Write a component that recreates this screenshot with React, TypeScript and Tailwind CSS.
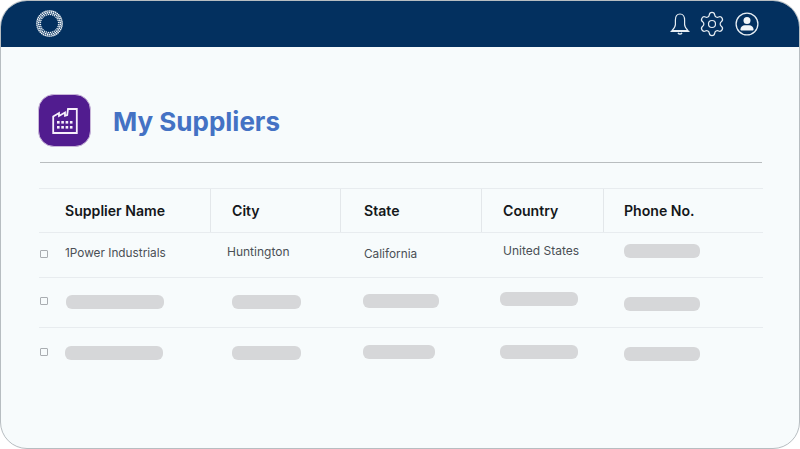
import { Settings } from 'lucide-react';

const columns = 'grid grid-cols-[171px_130px_141px_122px_160px]';
const bar = 'h-[14px] rounded-[6px] bg-[#d6d7d9]';

function Logo() {
  const rings = [
    { r: 12.6, n: 40, s: 0.85 },
    { r: 10.8, n: 34, s: 0.85 },
    { r: 9.1, n: 28, s: 0.75 },
  ];
  return (
    <svg width="28" height="28" viewBox="0 0 28 28">
      {rings.map((ring) =>
        Array.from({ length: ring.n }).map((_, i) => {
          const a = (i / ring.n) * Math.PI * 2 + ring.r;
          return (
            <circle
              key={`${ring.r}-${i}`}
              cx={14.5 + ring.r * Math.cos(a)}
              cy={13.5 + ring.r * Math.sin(a)}
              r={ring.s}
              fill="#f2f6f9"
            />
          );
        })
      )}
    </svg>
  );
}

function BellIcon() {
  return (
    <svg width="20" height="24" viewBox="0 0 20 24" fill="none" stroke="#e6edf3" strokeWidth="1.2" strokeLinejoin="round" strokeLinecap="round">
      <path d="M10 2c-3.2 0-4.6 2.8-4.6 6v4.4c0 2.3-1.3 4-3.4 6.2h16c-2.1-2.2-3.4-3.9-3.4-6.2V8c0-3.2-1.4-6-4.6-6z" />
      <path d="M1 19.4h18" />
      <path d="M8.4 21.4c.5.8 2.7.8 3.2 0" strokeWidth="1.6" />
    </svg>
  );
}

function UserIcon() {
  return (
    <svg width="24" height="24" viewBox="0 0 24 24">
      <circle cx="12" cy="12" r="10.9" fill="none" stroke="#e6edf3" strokeWidth="1.3" />
      <circle cx="12" cy="8.6" r="3.5" fill="#f2f6f9" />
      <path d="M5.4 17.6c0-2.8 2.2-4.4 4.4-4.4h4.4c2.2 0 4.4 1.6 4.4 4.4 0 .5-.3.8-.7.8H6.1c-.4 0-.7-.3-.7-.8z" fill="#f2f6f9" />
    </svg>
  );
}

function FactoryIcon() {
  return (
    <svg width="26" height="26" viewBox="0 0 26 26" fill="none" stroke="#f6effb" strokeWidth="1.8" strokeLinejoin="miter">
      <path d="M1.2 25V8.5L7 5v3l6-3.5v3.2l2.2-.7L16 1h8.8v24z" />
      <g fill="#f6effb" stroke="none">
        <rect x="5" y="13" width="2.6" height="2.6" />
        <rect x="9.3" y="13" width="2.6" height="2.6" />
        <rect x="13.6" y="13" width="2.6" height="2.6" />
        <rect x="17.9" y="13" width="2.6" height="2.6" />
        <rect x="5" y="18" width="2.6" height="2.6" />
        <rect x="9.3" y="18" width="2.6" height="2.6" />
        <rect x="13.6" y="18" width="2.6" height="2.6" />
        <rect x="17.9" y="18" width="2.6" height="2.6" />
      </g>
    </svg>
  );
}

function Checkbox({ className }: { className: string }) {
  return <span className={`block h-[8px] w-[8px] shrink-0 rounded-[1px] border border-[#a9adb1] ${className}`} />;
}

export default function App() {
  return (
    <div className="h-[449px] w-[800px] bg-white font-['Inter',sans-serif]">
      <div className="flex h-[449px] w-[800px] flex-col overflow-hidden rounded-[27px] border border-[#b7bdc1] bg-[#f7fbfc]">
        <header className="flex h-[46px] shrink-0 items-center justify-between bg-[#03305f] pl-[34px] pr-[40px]">
          <Logo />
          <div className="flex items-center gap-[10px]">
            <BellIcon />
            <Settings size={28} strokeWidth={1.05} color="#e6edf3" className="-mx-[2px]" />
            <span className="ml-[1px]"><UserIcon /></span>
          </div>
        </header>

        <main className="flex-1 pl-[38px]">
          <div className="ml-[1px] flex w-[722px] items-center gap-[22px] border-b border-[#b9bdbf] pb-[15px] pt-[47px]">
            <div className="-ml-[2px] flex h-[53px] w-[53px] items-center justify-center rounded-[16px] border border-[#c9b7d9] bg-[#511c8f] pl-[1px]">
              <FactoryIcon />
            </div>
            <h1 className="pt-[2px] text-[26px] font-bold leading-[33px] text-[#4472c4]">My Suppliers</h1>
          </div>

          <div className="mt-[25px] w-[724px] text-[11.8px] text-[#4a4f55]">
            <div className={`${columns} h-[45px] border-y border-[#e8ecef] text-[14.1px] font-semibold text-[#14171a]`}>
              <div className="flex items-center pl-[26px]">Supplier Name</div>
              <div className="flex items-center border-l border-[#e3e7ea] pl-[21px]">City</div>
              <div className="flex items-center border-l border-[#e3e7ea] pl-[23px]">State</div>
              <div className="flex items-center border-l border-[#e3e7ea] pl-[21px]">Country</div>
              <div className="flex items-center border-l border-[#e3e7ea] pl-[20px]">Phone No.</div>
            </div>

            <div className={`${columns} h-[45px] border-b border-[#e8ecef]`}>
              <div className="flex items-center pb-[2px]">
                <Checkbox className="ml-[1px]" />
                <span className="ml-[17px]">1Power Industrials</span>
              </div>
              <div className="pl-[17px] pt-[11px] text-[12px] leading-[16px]">Huntington</div>
              <div className="pl-[24px] pt-[13px] leading-[16px]">California</div>
              <div className="pl-[22px] pt-[10px] text-[12px] leading-[16px]">United States</div>
              <div className="pl-[21px] pt-[11px]"><div className={`${bar} w-[76px]`} /></div>
            </div>

            <div className={`${columns} h-[50px] border-b border-[#e8ecef]`}>
              <div className="flex pt-[19px]">
                <Checkbox className="ml-[1px]" />
                <div className={`${bar} -mt-[2px] ml-[18px] w-[98px]`} />
              </div>
              <div className="pl-[22px] pt-[17px]"><div className={`${bar} w-[69px]`} /></div>
              <div className="pl-[23px] pt-[16px]"><div className={`${bar} w-[76px]`} /></div>
              <div className="pl-[19px] pt-[14px]"><div className={`${bar} w-[78px]`} /></div>
              <div className="pl-[21px] pt-[19px]"><div className={`${bar} w-[76px]`} /></div>
            </div>

            <div className={`${columns} h-[50px]`}>
              <div className="flex pt-[20px]">
                <Checkbox className="ml-[1px]" />
                <div className={`${bar} -mt-[2px] ml-[17px] w-[98px]`} />
              </div>
              <div className="pl-[22px] pt-[18px]"><div className={`${bar} w-[69px]`} /></div>
              <div className="pl-[23px] pt-[17px]"><div className={`${bar} w-[72px]`} /></div>
              <div className="pl-[19px] pt-[17px]"><div className={`${bar} w-[78px]`} /></div>
              <div className="pl-[21px] pt-[19px]"><div className={`${bar} w-[76px]`} /></div>
            </div>
          </div>
        </main>
      </div>
    </div>
  );
}
